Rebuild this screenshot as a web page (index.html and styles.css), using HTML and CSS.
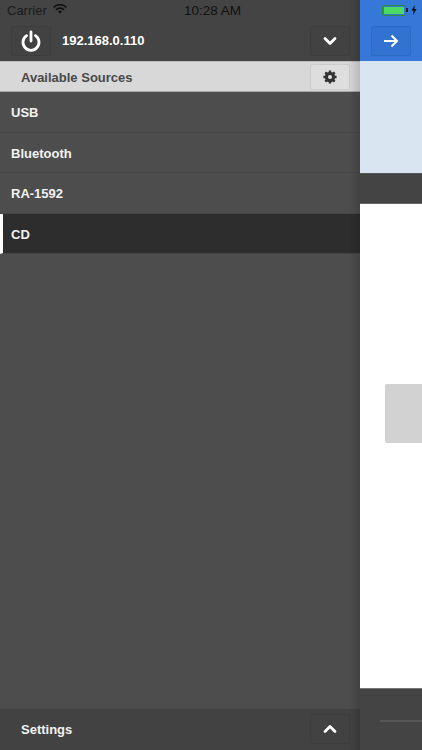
FILE: index.html
```html
<!DOCTYPE html>
<html>
<head>
    <title>Sources</title>
    <meta name="viewport" content="width=device-width, initial-scale=1.0">
    <link rel="stylesheet" href="styles.css">
</head>
<body>
    <div class="app">
        <div class="status-bar">
            <div class="status-left">
                <span>Carrier</span>
                <svg class="wifi" width="14" height="10" viewBox="0 0 14 10">
                    <path d="M0.600 3.400a9 9 0 0 1 12.800 0" fill="none" stroke="#111" stroke-width="1.700"/>
                    <path d="M3 5.800a5.600 5.600 0 0 1 8 0" fill="none" stroke="#111" stroke-width="1.700"/>
                    <path d="M5 7.500a2.900 2.900 0 0 1 4 0L7 9.800z" fill="#111"/>
                </svg>
            </div>
            <div class="status-time">10:28 AM</div>
            <div class="status-right">
                <span class="battery"><span class="battery-fill"></span></span>
                <span class="battery-tip"></span>
                <svg width="6" height="10" viewBox="0 0 6 10"><path d="M3.800 0L0.400 5.600h2.200L2 10l3.600-6H3.300z" fill="#111"/></svg>
            </div>
        </div>

        <div class="drawer">
            <div class="drawer-header">
                <button class="icon-btn">
                    <svg width="20" height="22" viewBox="0 0 20 22">
                        <path d="M5.600 5.600a8 8 0 1 0 8.800 0" fill="none" stroke="#fff" stroke-width="2.800" stroke-linecap="round"/>
                        <path d="M10 2v9" fill="none" stroke="#fff" stroke-width="2.800" stroke-linecap="round"/>
                    </svg>
                </button>
                <span class="host">192.168.0.110</span>
                <button class="icon-btn push-right">
                    <svg width="14" height="10" viewBox="0 0 14 10"><path d="M2 2.500l5 5 5-5" fill="none" stroke="#fff" stroke-width="2.800" stroke-linecap="round" stroke-linejoin="round"/></svg>
                </button>
            </div>

            <div class="sources-bar">
                <span class="sources-title">Available Sources</span>
                <button class="gear-btn">
                    <svg width="14" height="14" viewBox="0 0 14 14">
                        <circle cx="7" cy="7" r="3.900" fill="none" stroke="#333" stroke-width="2.600"/>
                        <path d="M7 .4v13.200M.4 7h13.200M2.300 2.300l9.400 9.400M11.700 2.300l-9.400 9.400" stroke="#333" stroke-width="2.400"/>
                        <circle cx="7" cy="7" r="2" fill="#e2e2e2"/>
                    </svg>
                </button>
            </div>

            <div class="source-list">
                <div class="source">USB</div>
                <div class="source">Bluetooth</div>
                <div class="source">RA-1592</div>
                <div class="source active">CD</div>
            </div>

            <div class="drawer-footer">
                <span class="settings">Settings</span>
                <button class="icon-btn push-right">
                    <svg width="14" height="10" viewBox="0 0 14 10"><path d="M2 7.500l5-5 5 5" fill="none" stroke="#fff" stroke-width="2.800" stroke-linecap="round" stroke-linejoin="round"/></svg>
                </button>
            </div>
        </div>

        <div class="main">
            <div class="main-header">
                <button class="arrow-btn">
                    <svg width="16" height="14" viewBox="0 0 16 14"><path d="M1 7h13M8.500 1.500L14 7l-5.500 5.500" fill="none" stroke="#fff" stroke-width="2"/></svg>
                </button>
            </div>
            <div class="main-tint"></div>
            <div class="main-band"></div>
            <div class="main-content">
                <div class="side-tab"></div>
            </div>
            <div class="main-footer">
                <div class="footer-line"></div>
            </div>
        </div>
    </div>
</body>
</html>
```

FILE: styles.css
```css
* { box-sizing: border-box; }

body {
    margin: 0;
    background: #4d4d4d;
    font-family: "Liberation Sans", Arial, sans-serif;
    overflow: hidden;
}

button {
    padding: 0;
    cursor: pointer;
}

.app {
    position: relative;
    display: flex;
    width: 422px;
    height: 750px;
}

/* status bar sits over both panes */
.status-bar {
    position: absolute;
    top: 0;
    left: 0;
    right: 0;
    height: 20px;
    padding: 0 5px 0 7px;
    display: flex;
    justify-content: space-between;
    align-items: center;
    font-size: 13px;
    color: #1c1c1c;
    z-index: 2;
}

.status-left {
    display: flex;
    align-items: center;
    gap: 6px;
    color: #1a1a1a;
}

.wifi {
    margin-top: -3px;
}

.status-time {
    position: absolute;
    left: 184px;
    top: 3px;
    font-size: 13.500px;
    color: #111;
}

.status-right {
    display: flex;
    align-items: center;
}

.battery {
    display: block;
    width: 24px;
    height: 11px;
    padding: 1px;
    border: 1px solid #2f8a3e;
    border-radius: 2px;
}

.battery-fill {
    display: block;
    height: 100%;
    background: #4cd964;
}

.battery-tip {
    width: 2px;
    height: 4px;
    margin-right: 3px;
    background: #222;
}

.drawer {
    position: relative;
    width: 360px;
    display: flex;
    flex-direction: column;
    background: #4d4d4d;
}

/* shadow falling along the drawer's right edge */
.drawer::after {
    content: "";
    position: absolute;
    top: 0;
    right: 0;
    bottom: 0;
    width: 12px;
    background: linear-gradient(to right, rgba(0,0,0,0), rgba(0,0,0,0.14));
    pointer-events: none;
}

.drawer-header {
    height: 61px;
    padding: 26px 10px 0 11px;
    display: flex;
    align-items: flex-start;
    background: #444;
}

.icon-btn {
    width: 40px;
    height: 30px;
    display: flex;
    align-items: center;
    justify-content: center;
    background: #424242;
    border: 1px solid #3d3d3d;
    border-radius: 2px;
}

.push-right {
    margin-left: auto;
}

.host {
    margin-left: 11px;
    line-height: 30px;
    font-size: 13px;
    font-weight: bold;
    color: #fff;
}

.sources-bar {
    height: 31px;
    padding: 3px 10px 2px 21px;
    display: flex;
    align-items: center;
    background: #d8d8d8;
    border-top: 1px solid #bdbdbd;
    border-bottom: 1px solid #a8a8a8;
}

.sources-title {
    font-size: 13px;
    font-weight: bold;
    color: #484848;
}

.gear-btn {
    width: 40px;
    height: 26px;
    margin-left: auto;
    display: flex;
    align-items: center;
    justify-content: center;
    background: #dedede;
    border: 1px solid #cbcbcb;
    border-radius: 2px;
}

.source-list {
    flex: 1;
}

.source {
    height: 40.500px;
    padding: 2px 0 0 11px;
    display: flex;
    align-items: center;
    font-size: 13px;
    font-weight: bold;
    color: #f2f2f2;
    border-bottom: 1px solid #464646;
}

.source.active {
    background: #2d2d2d;
    border-left: 3px solid #fff;
    border-bottom-color: #444;
    padding-left: 8px;
}

.drawer-footer {
    height: 41px;
    padding: 5px 10px 6px 21px;
    display: flex;
    align-items: center;
    background: #424242;
}

.settings {
    font-size: 13px;
    font-weight: bold;
    color: #f2f2f2;
}

.main {
    flex: 1;
    display: flex;
    flex-direction: column;
}

.main-header {
    height: 61px;
    padding: 26px 0 0 11px;
    background: #3578d8;
}

.arrow-btn {
    width: 40px;
    height: 30px;
    display: flex;
    align-items: center;
    justify-content: center;
    background: #3272d0;
    border: 1px solid #2d6ac2;
    border-radius: 2px;
}

.main-tint {
    height: 112px;
    background: #d9e6f1;
}

.main-band {
    height: 31px;
    background: #444;
    border-top: 1px solid #555;
    border-bottom: 1px solid #666;
}

.main-content {
    flex: 1;
    padding: 180px 0 0 25px;
    background: #fff;
}

.side-tab {
    height: 59px;
    background: #d2d2d2;
    border-radius: 2px 0 0 2px;
}

.main-footer {
    height: 62px;
    padding: 31px 0 0 20px;
    background: #444;
    border-top: 1px solid #777;
}

.footer-line {
    height: 2px;
    background: #555;
}
```
